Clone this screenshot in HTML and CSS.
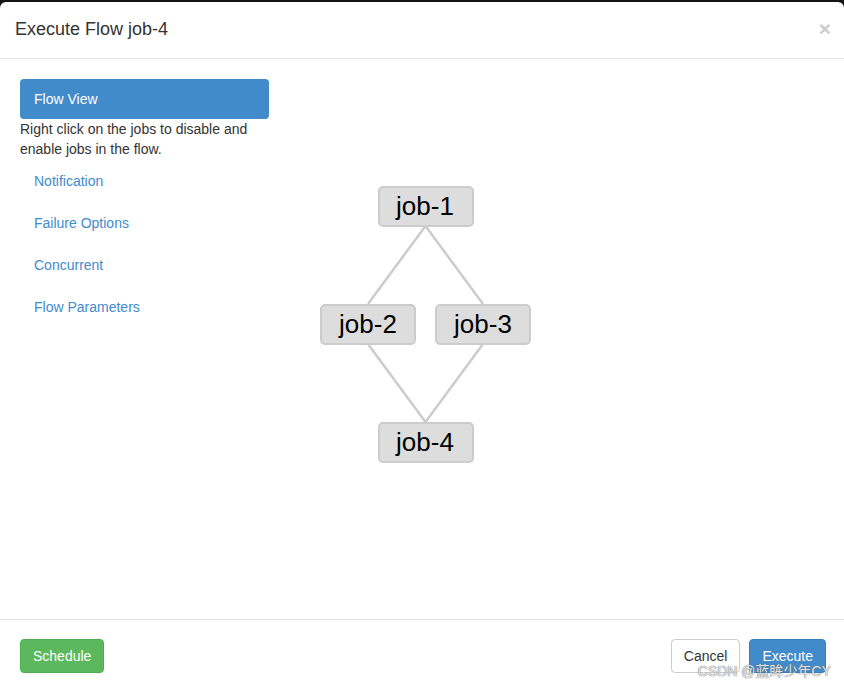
FILE: index.html
```html
<!DOCTYPE html>
<html>
<head>
<meta charset="utf-8">
<link rel="stylesheet" href="styles.css">
</head>
<body>
<div class="modal">
  <div class="modal-header">
    <span class="close">&times;</span>
    <h4 class="title">Execute Flow job-4</h4>
  </div>
  <div class="modal-body">
    <div class="side">
      <a class="pill active">Flow View</a>
      <p class="hint">Right click on the jobs to disable and enable jobs in the flow.</p>
      <a class="pill">Notification</a>
      <a class="pill">Failure Options</a>
      <a class="pill">Concurrent</a>
      <a class="pill">Flow Parameters</a>
    </div>
    <div class="graph">
      <svg width="540" height="520" viewBox="0 0 540 520">
        <g stroke="#cccccc" stroke-width="2.5" fill="none">
          <line x1="141.5" y1="147" x2="84" y2="225"/>
          <line x1="141.5" y1="147" x2="199" y2="225"/>
          <line x1="84" y1="265" x2="141.5" y2="343"/>
          <line x1="199" y1="265" x2="141.5" y2="343"/>
        </g>
        <g fill="#dddddd" stroke="#cccccc" stroke-width="2">
          <rect x="95" y="108" width="94" height="39" rx="4"/>
          <rect x="37" y="226" width="94" height="39" rx="4"/>
          <rect x="152" y="226" width="94" height="39" rx="4"/>
          <rect x="95" y="344" width="94" height="39" rx="4"/>
        </g>
        <g class="node-label" text-anchor="middle">
          <text x="141" y="136">job-1</text>
          <text x="84" y="254">job-2</text>
          <text x="199" y="254">job-3</text>
          <text x="141" y="372">job-4</text>
        </g>
      </svg>
    </div>
  </div>
  <div class="modal-footer">
    <button class="btn btn-success">Schedule</button>
    <div class="right">
      <button class="btn btn-default">Cancel</button>
      <button class="btn btn-primary">Execute</button>
    </div>
  </div>
  <div class="watermark">CSDN @蓝眸少年CY</div>
</div>
</body>
</html>
```
FILE: styles.css
```css
* { box-sizing: border-box; }
html, body { margin: 0; padding: 0; }
body {
  background: #151515;
  font-family: "Liberation Sans", Arial, "Noto Sans CJK SC", sans-serif;
  color: #333;
  width: 844px;
  height: 688px;
  overflow: hidden;
}
.modal {
  position: relative;
  margin-top: 2px;
  background: #fff;
  border-radius: 6px 6px 0 0;
  height: 686px;
}
.modal-header {
  padding: 15px;
  border-bottom: 1px solid #e5e5e5;
  height: 57px;
}
.title {
  margin: 0;
  font-size: 18px;
  font-weight: normal;
  line-height: 25px;
  color: #333;
}
.close {
  float: right;
  font-size: 21px;
  font-weight: bold;
  line-height: 1;
  color: #000;
  opacity: 0.2;
  margin-top: 1px;
  margin-right: -2px;
}
.modal-body {
  display: flex;
  height: 561px;
  padding: 20px 0 0 20px;
  border-bottom: 1px solid #e5e5e5;
}
.side {
  width: 249px;
  display: flex;
  flex-direction: column;
}
.pill {
  display: block;
  padding: 10px 14px;
  line-height: 20px;
  font-size: 14px;
  color: #428bca;
  border-radius: 4px;
  margin-top: 2px;
}
.pill.active {
  background: #428bca;
  color: #fff;
  margin-top: 0;
}
.hint {
  margin: 0;
  font-size: 14px;
  line-height: 20px;
  color: #333;
}
.graph {
  margin-left: 15px;
}
.graph svg { display: block; }
.node-label {
  font-family: "Liberation Sans", Arial, sans-serif;
  font-size: 26px;
  fill: #000;
}
.modal-footer {
  display: flex;
  justify-content: space-between;
  padding: 19px 18px 0 20px;
}
.right { display: flex; gap: 9px; }
.btn {
  font-family: "Liberation Sans", Arial, sans-serif;
  font-size: 14px;
  line-height: 20px;
  padding: 6px 12px;
  height: 34px;
  border-radius: 4px;
  border: 1px solid transparent;
}
.btn-success { background: #5cb85c; border-color: #4cae4c; color: #fff; }
.btn-default { background: #fff; border-color: #ccc; color: #333; }
.btn-primary { background: #428bca; border-color: #357ebd; color: #fff; }
.watermark {
  position: absolute;
  right: 13px;
  bottom: 8px;
  font-size: 14px;
  color: rgba(255,255,255,0.8);
  text-shadow: 0 0 1px #777, 0 0 1px #777;
}
```
